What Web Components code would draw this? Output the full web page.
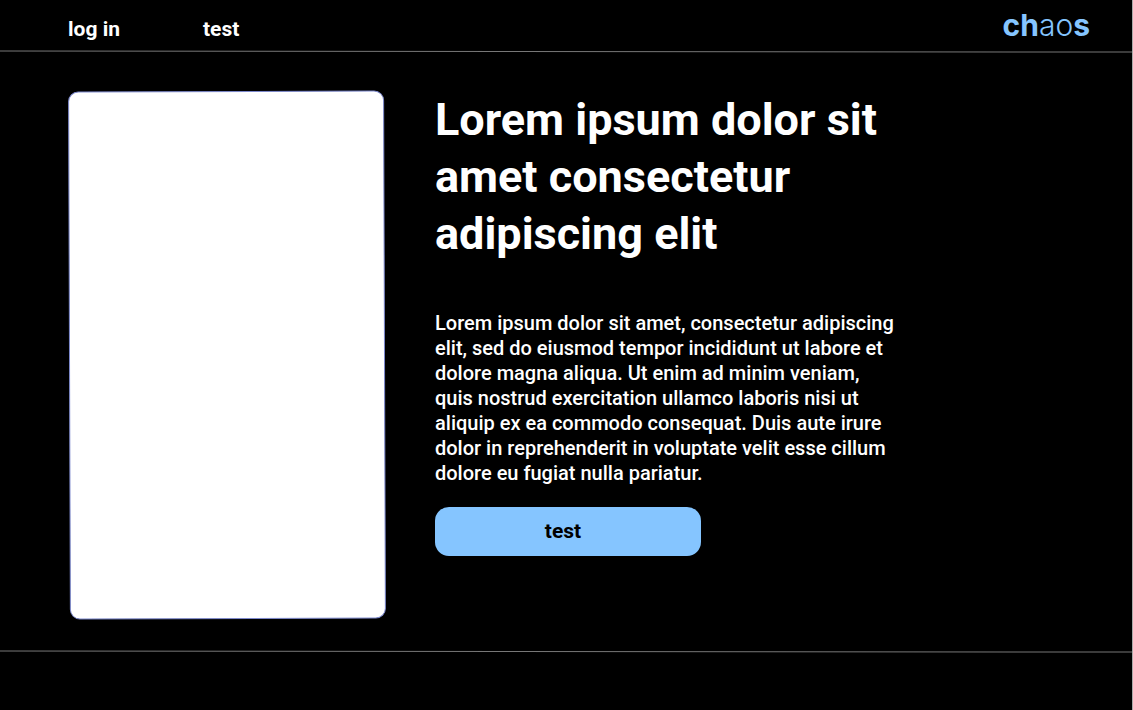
<!DOCTYPE html>
<html lang="en">
<head>
<meta charset="utf-8">
<meta name="viewport" content="width=device-width, initial-scale=1">
<title>chaos</title>
<style>
  body {
    margin: 0;
    background: #000;
    color: #fff;
    font-family: Roboto, "Noto Sans", sans-serif;
  }
</style>
</head>
<body>
<chaos-page>
  <chaos-header slot="header">
    <chaos-link href="#login">log in</chaos-link>
    <chaos-link href="#test">test</chaos-link>
    <chaos-logo slot="brand"></chaos-logo>
  </chaos-header>
  <chaos-hero>
    <span slot="title">Lorem ipsum dolor sit amet consectetur adipiscing elit</span>
    <span slot="text">Lorem ipsum dolor sit amet, consectetur adipiscing elit, sed do eiusmod tempor incididunt ut labore et dolore magna aliqua. Ut enim ad minim veniam, quis nostrud exercitation ullamco laboris nisi ut aliquip ex ea commodo consequat. Duis aute irure dolor in reprehenderit in voluptate velit esse cillum dolore eu fugiat nulla pariatur.</span>
    <chaos-button slot="action">test</chaos-button>
  </chaos-hero>
</chaos-page>

<script>
const define = (name, html, setup) => {
  const template = document.createElement('template');
  template.innerHTML = html;
  customElements.define(name, class extends HTMLElement {
    constructor() {
      super();
      this.attachShadow({ mode: 'open' }).append(template.content.cloneNode(true));
    }
    connectedCallback() {
      if (setup) setup(this);
    }
  });
};

define('chaos-page', `
  <style>
    :host { display: flex; flex-direction: column; box-sizing: border-box; min-height: 100vh; border-right: 1px solid #aaa; }
    hr { width: 100%; margin: 0; border: 0; height: 1px; background: #777; transform: rotate(0.06deg); }
  </style>
  <slot name="header"></slot>
  <hr>
  <main><slot></slot></main>
  <hr>
  <footer></footer>`);

define('chaos-header', `
  <style>
    :host { display: block; }
    header { display: flex; align-items: center; justify-content: space-between; height: 51px; padding: 0 42px 0 68px; }
    nav { display: grid; grid-template-columns: 135px auto; padding-top: 8px; }
  </style>
  <header>
    <nav aria-label="Main"><slot></slot></nav>
    <slot name="brand"></slot>
  </header>`);

define('chaos-link', `
  <style>
    :host { display: block; }
    a { color: inherit; font-size: 21px; line-height: 25px; font-weight: 700; text-decoration: none; }
  </style>
  <a><slot></slot></a>`, el => {
  el.shadowRoot.querySelector('a').setAttribute('href', el.getAttribute('href'));
});

define('chaos-logo', `
  <style>
    :host { display: block; padding-bottom: 2px; color: #85c5ff; font: 700 30px/48px Inter, sans-serif; }
    span { font-weight: 300; }
  </style>
  ch<span>ao</span>s`);

define('chaos-hero', `
  <style>
    :host { display: flex; gap: 50px; padding: 39px 68px 32px 69px; }
    .card {
      box-sizing: border-box; flex: 0 1 316px; height: 528px;
      background: #fff; border: 1px solid #7c88cc; border-radius: 10px;
      transform: rotate(-0.2deg);
    }
    .copy { flex: 0 1 460px; min-width: 0; }
    h1 { margin: 0 0 49px; font-size: 45px; line-height: 57px; font-weight: 700; }
    p { margin: 0 0 21px; font-size: 20px; line-height: 25px; font-weight: 500; }
  </style>
  <div class="card"></div>
  <section class="copy">
    <h1><slot name="title"></slot></h1>
    <p><slot name="text"></slot></p>
    <slot name="action"></slot>
  </section>`);

define('chaos-button', `
  <style>
    :host { display: block; max-width: 266px; }
    button {
      display: block; width: 100%; padding: 12px 10px 12px 0;
      border: 0; border-radius: 14px; background: #85c5ff; color: #000;
      font: inherit; font-size: 21px; line-height: 25px; font-weight: 700; cursor: pointer;
    }
  </style>
  <button type="button"><slot></slot></button>`);
</script>
</body>
</html>
